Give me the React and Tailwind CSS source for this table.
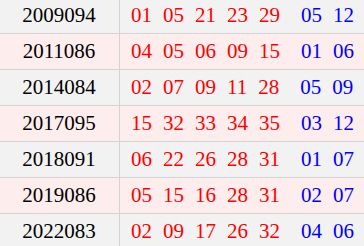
import React from "react";

const rows = [
  { issue: "2009094", red: ["01", "05", "21", "23", "29"], blue: ["05", "12"] },
  { issue: "2011086", red: ["04", "05", "06", "09", "15"], blue: ["01", "06"] },
  { issue: "2014084", red: ["02", "07", "09", "11", "28"], blue: ["05", "09"] },
  { issue: "2017095", red: ["15", "32", "33", "34", "35"], blue: ["03", "12"] },
  { issue: "2018091", red: ["06", "22", "26", "28", "31"], blue: ["01", "07"] },
  { issue: "2019086", red: ["05", "15", "16", "28", "31"], blue: ["02", "07"] },
  { issue: "2022083", red: ["02", "09", "17", "26", "32"], blue: ["04", "06"] },
];

const App = () => {
  return (
    <div
      className="w-[364px] h-[246px] overflow-hidden bg-white text-[21px] leading-none"
      style={{ fontFamily: '"Liberation Serif", "Noto Sans CJK SC", serif' }}
    >
      <div className="-mt-[2px]">
        {rows.map((r, i) => (
          <div
            key={r.issue}
            className={`flex h-[36px] border-b border-[#d3d3d3] ${
              i % 2 === 0 ? "bg-[#f2f2f2]" : "bg-[#fdeded]"
            }`}
          >
            <div className="w-[120px] shrink-0 border-r border-[#d3d3d3] flex items-center justify-center pr-[1px] text-black">
              {r.issue}
            </div>
            <div className="flex items-center pl-[11px]">
              <div className="flex gap-[11px] text-[#ff0000]">
                {r.red.map((n, k) => (
                  <span key={k}>{n}</span>
                ))}
              </div>
              <div className="flex gap-[11px] ml-[21px] text-[#0000ff]">
                {r.blue.map((n, k) => (
                  <span key={k}>{n}</span>
                ))}
              </div>
            </div>
          </div>
        ))}
      </div>
    </div>
  );
};

export default App;
